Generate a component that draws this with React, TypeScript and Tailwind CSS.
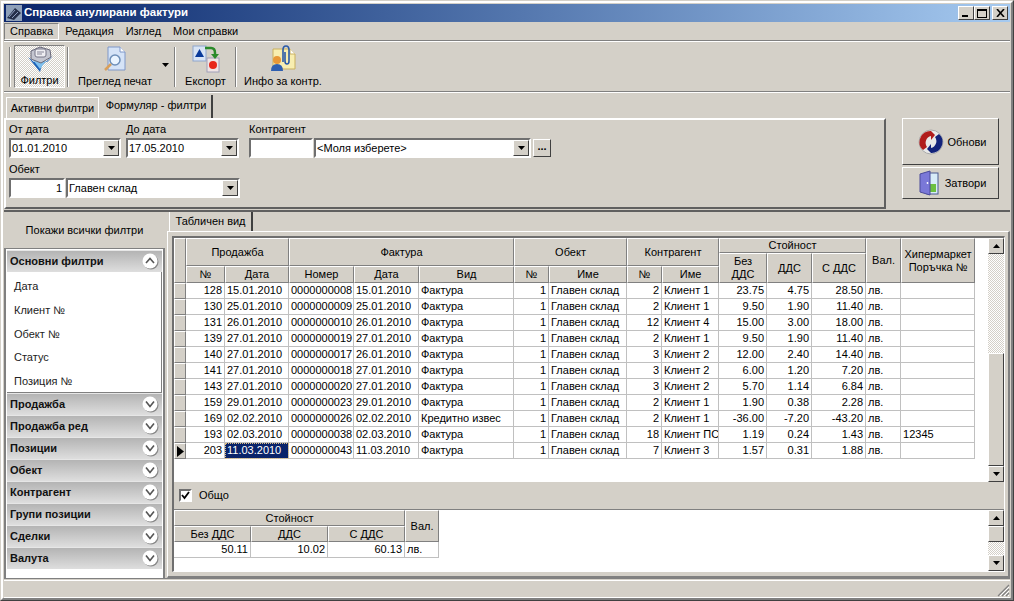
import { ReactNode } from "react";

const raised = "border border-t-white border-l-white border-r-[#404040] border-b-[#404040]";
const sunken = "border-2 border-t-[#6f6f6f] border-l-[#6f6f6f] border-r-white border-b-white";
const dither = "bg-[image:repeating-conic-gradient(#ffffff_0_25%,#d4d0c8_0_50%)] bg-size-[2px_2px]";
const th = "bg-[#d4d0c8] font-normal p-0 text-center overflow-hidden border-t border-l border-t-white border-l-white border-r border-b border-r-[#808080] border-b-[#808080]";

const rows = [
  ["128", "15.01.2010", "0000000008", "15.01.2010", "Фактура", "2", "Клиент 1", "23.75", "4.75", "28.50", ""],
  ["130", "25.01.2010", "0000000009", "25.01.2010", "Фактура", "2", "Клиент 1", "9.50", "1.90", "11.40", ""],
  ["131", "26.01.2010", "0000000010", "26.01.2010", "Фактура", "12", "Клиент 4", "15.00", "3.00", "18.00", ""],
  ["139", "27.01.2010", "0000000019", "27.01.2010", "Фактура", "2", "Клиент 1", "9.50", "1.90", "11.40", ""],
  ["140", "27.01.2010", "0000000017", "26.01.2010", "Фактура", "3", "Клиент 2", "12.00", "2.40", "14.40", ""],
  ["141", "27.01.2010", "0000000018", "27.01.2010", "Фактура", "3", "Клиент 2", "6.00", "1.20", "7.20", ""],
  ["143", "27.01.2010", "0000000020", "27.01.2010", "Фактура", "3", "Клиент 2", "5.70", "1.14", "6.84", ""],
  ["159", "29.01.2010", "0000000023", "29.01.2010", "Фактура", "2", "Клиент 1", "1.90", "0.38", "2.28", ""],
  ["169", "02.02.2010", "0000000026", "02.02.2010", "Кредитно извес", "2", "Клиент 1", "-36.00", "-7.20", "-43.20", ""],
  ["193", "02.03.2010", "0000000038", "02.03.2010", "Фактура", "18", "Клиент ПС", "1.19", "0.24", "1.43", "12345"],
  ["203", "11.03.2010", "0000000043", "11.03.2010", "Фактура", "7", "Клиент 3", "1.57", "0.31", "1.88", ""],
];

const colWidths = ["w-[12px]", "w-[39px]", "w-[64px]", "w-[65px]", "w-[65px]", "w-[95px]", "w-[35px]", "w-[78px]", "w-[35px]", "w-[57px]", "w-[48px]", "w-[45px]", "w-[54px]", "w-[35px]", "w-[74px]"];

const Arrow = ({ up }: { up?: boolean }) => (
  <svg width="7" height="4" viewBox="0 0 7 4">
    <path d={up ? "M3.5 0L7 4H0Z" : "M0 0H7L3.5 4Z"} fill="#000" />
  </svg>
);

const ScrollBtn = ({ up }: { up?: boolean }) => (
  <div className={`${raised} h-[16px] w-[16px] bg-[#d4d0c8] flex items-center justify-center shrink-0`}>
    <Arrow up={up} />
  </div>
);

const Combo = ({ w, text }: { w: string; text: string }) => (
  <div className={`${sunken} ${w} h-[20px] bg-white flex items-center justify-between`}>
    <span className="pl-[1px] whitespace-nowrap">{text}</span>
    <div className={`${raised} h-[16px] w-[16px] bg-[#d4d0c8] flex items-center justify-center`}>
      <Arrow />
    </div>
  </div>
);

const Chevron = ({ up }: { up?: boolean }) => (
  <svg width="17" height="17" viewBox="0 0 17 17">
    <circle cx="9" cy="9" r="7.5" fill="#8a8a8a" />
    <circle cx="8" cy="8" r="7.5" fill="#fff" />
    <path d={up ? "M4 10L8 5.5L12 10" : "M4 5.5L8 10.5L12 5.5"} fill="none" stroke="#555" strokeWidth="1.6" />
  </svg>
);

const SideHead = ({ text, up }: { text: string; up?: boolean }) => (
  <div className="h-[22px] flex items-center justify-between pl-[3px] pr-[3px] bg-linear-to-b from-[#b4b4b4] to-[#dedede] border-t border-t-[#e6e6e6]">
    <span className="font-bold text-[#111]">{text}</span>
    <Chevron up={up} />
  </div>
);

const ToolBtn = ({ w, label, icon, on }: { w: string; label: string; icon: ReactNode; on?: boolean }) => (
  <div
    className={`${w} h-[43px] flex flex-col items-center justify-between ${
      on ? `border border-t-[#808080] border-l-[#808080] border-r-white border-b-white ${dither}` : ""
    }`}
  >
    <div className="h-[27px] flex items-center justify-center">{icon}</div>
    <span className="pb-[1px]">{label}</span>
  </div>
);

const Sep = () => <div className="w-[2px] h-[40px] border-l border-l-[#808080] border-r border-r-white mx-[2px]" />;

const FilterIcon = () => (
  <svg width="30" height="27" viewBox="0 0 30 27">
    <path d="M3 11L15 26L17 19L28 10L22 16H9Z" fill="#1d63b8" />
    <path d="M8 14L15 23L21 15Z" fill="#7fc0ee" />
    <path d="M6 5L15 1L25 4L26 11L16 17L6 13Z" fill="#c4c6d0" stroke="#667" />
    <rect x="10" y="3" width="11" height="8" rx="2" fill="#eeeef2" stroke="#778" />
    <path d="M12 6H19M12 8H17" stroke="#889" />
  </svg>
);

const PreviewIcon = () => (
  <svg width="24" height="26" viewBox="0 0 24 26">
    <path d="M5 1H17L22 6V24H5Z" fill="#d5e3f7" stroke="#7f97c8" />
    <path d="M17 1V6H22" fill="#fff" stroke="#7f97c8" />
    <circle cx="12" cy="14" r="5" fill="#eaf4ff" stroke="#6f8fb8" strokeWidth="1.5" />
    <path d="M8 18L2 24" stroke="#d9a05c" strokeWidth="2.5" />
  </svg>
);

const ExportIcon = () => (
  <svg width="28" height="28" viewBox="0 0 28 28">
    <rect x="1" y="1" width="13" height="15" fill="#d8e4f5" stroke="#8ea5cc" />
    <path d="M7.5 4L12 12H3Z" fill="#0a3a9a" />
    <rect x="15" y="13" width="12" height="14" fill="#f0e4e4" stroke="#a0a0b8" />
    <circle cx="21" cy="20" r="4" fill="#e8261a" />
    <path d="M13 3H19Q23 3 23 8V11" fill="none" stroke="#2a8a2a" strokeWidth="2.5" />
    <path d="M19 9H27L23 14Z" fill="#2a8a2a" />
  </svg>
);

const InfoIcon = () => (
  <svg width="26" height="27" viewBox="0 0 26 27">
    <path d="M3 4H20L25 9V24H3Z" fill="#f8eeb0" stroke="#c9b060" />
    <path d="M20 4V9H25" fill="#fff" stroke="#c9b060" />
    <path d="M13 17V5Q13 1 16 1Q19 1 19 5V16Q19 19 17 19Q15 19 15 16V7" fill="none" stroke="#2a5aa8" strokeWidth="1.6" />
    <circle cx="7" cy="15" r="4" fill="#e89838" />
    <path d="M1 26Q1 19 7 19Q13 19 13 26Z" fill="#2f5fb0" />
  </svg>
);

const RefreshIcon = () => (
  <svg width="26" height="26" viewBox="0 0 26 26">
    <circle cx="13" cy="13" r="12" fill="#e8e8e8" stroke="#aaa" />
    <path d="M13 2A11 11 0 0 0 5 21L9 18A7 7 0 0 1 13 7V11L17 6L13 2Z" fill="#b01c1c" />
    <path d="M13 24A11 11 0 0 0 21 5L17 8A7 7 0 0 1 13 19V15L9 20L13 24Z" fill="#12227a" />
  </svg>
);

const DoorIcon = () => (
  <svg width="20" height="26" viewBox="0 0 20 26">
    <rect x="8" y="3" width="11" height="21" fill="#d8ecf8" stroke="#4a5a90" />
    <rect x="10" y="14" width="7" height="8" fill="#6cc040" />
    <path d="M1 4L11 1V25L1 22Z" fill="#7a78d8" stroke="#4a4a9a" />
    <circle cx="8.5" cy="13" r="0.9" fill="#fff" />
  </svg>
);

const App = () => {
  return (
    <div className="w-[1014px] h-[601px] overflow-hidden bg-[#d4d0c8] border border-t-[#d4d0c8] border-l-[#d4d0c8] border-r-[#404040] border-b-[#404040] font-['Liberation_Sans',sans-serif] text-[11px] leading-none text-black">
      <div className="h-full border-2 border-t-white border-l-white border-r-[#808080] border-b-[#808080] px-[1px] pt-[1px] flex flex-col">
        {/* title bar */}
        <div className="h-[18px] bg-linear-to-r from-[#0a246a] to-[#a6caf0] flex items-center justify-between pl-[2px] pr-[2px] shrink-0">
          <div className="flex items-center gap-[2px]">
            <svg width="16" height="16" viewBox="0 0 16 16">
              <rect width="16" height="16" fill="#8fa0b8" />
              <path d="M1 13L9 3L15 8L8 15Z" fill="#26304a" />
              <path d="M3 12L9 5M6 13L12 7" stroke="#8f9fc0" />
            </svg>
            <span className="text-white font-bold text-[11.5px]">Справка анулирани фактури</span>
          </div>
          <div className="flex items-center">
            <div className={`${raised} w-[16px] h-[14px] bg-[#d4d0c8] flex items-end pl-[3px] pb-[2px]`}>
              <div className="w-[6px] h-[2px] bg-black" />
            </div>
            <div className={`${raised} w-[16px] h-[14px] bg-[#d4d0c8] flex items-center justify-center ml-[0px]`}>
              <div className="w-[10px] h-[9px] border border-black border-t-2" />
            </div>
            <div className={`${raised} w-[16px] h-[14px] bg-[#d4d0c8] flex items-center justify-center ml-[2px]`}>
              <svg width="9" height="8" viewBox="0 0 9 8">
                <path d="M1 0L8 8M8 0L1 8" stroke="#000" strokeWidth="1.6" />
              </svg>
            </div>
          </div>
        </div>

        {/* menu */}
        <div className="h-[19px] flex items-center shrink-0 border-b border-b-[#808080] pt-[1px]">
          <div className="h-[17px] px-[5px] flex items-center border border-t-[#808080] border-l-[#808080] border-r-white border-b-white">Справка</div>
          <div className="pl-[6px] pr-[6px]">Редакция</div>
          <div className="pl-[6px] pr-[6px]">Изглед</div>
          <div className="pl-[6px]">Мои справки</div>
        </div>

        {/* toolbar */}
        <div className="h-[51px] shrink-0 border-t border-t-white border-b border-b-[#808080] flex items-center pl-[3px]">
          <Sep />
          <div className="w-[1px]" />
          <ToolBtn w="w-[51px]" label="Филтри" icon={<FilterIcon />} on />
          <Sep />
          <ToolBtn w="w-[88px]" label="Преглед печат" icon={<PreviewIcon />} />
          <div className="w-[13px] pl-[3px] pb-[3px] flex justify-start">
            <Arrow />
          </div>
          <Sep />
          <ToolBtn w="w-[55px]" label="Експорт" icon={<ExportIcon />} />
          <Sep />
          <ToolBtn w="w-[88px]" label="Инфо за контр." icon={<InfoIcon />} />
        </div>

        {/* tabs and filter form */}
        <div className="shrink-0 border-t border-t-white pt-[2px] flex pb-[1px]">
          <div className="w-[882px]">
            <div className="h-[23px] flex items-end pl-[2px]">
              <div className="h-[21px] w-[93px] flex items-center justify-center border-t border-l border-t-white border-l-white border-r border-r-white">Активни филтри</div>
              <div className="h-[23px] w-[114px] flex items-center justify-center pb-[2px] pl-[2px] border-r-2 border-r-[#404040]">Формуляр - филтри</div>
            </div>
            <div className="h-[91px] border-2 border-t-white border-l-white border-r-[#606060] border-b-[#606060] pl-[3px] pt-[4px]">
              <div className="flex">
                <div className="w-[117px]">
                  <div className="h-[14px]">От дата</div>
                  <Combo w="w-[112px]" text="01.01.2010" />
                </div>
                <div className="w-[123px]">
                  <div className="h-[14px]">До дата</div>
                  <Combo w="w-[113px]" text="17.05.2010" />
                </div>
                <div>
                  <div className="h-[14px]">Контрагент</div>
                  <div className="flex">
                    <div className={`${sunken} w-[64px] h-[20px] bg-white`} />
                    <div className="w-[1px]" />
                    <Combo w="w-[217px]" text="<Моля изберете>" />
                    <div className={`${raised} w-[18px] h-[18px] bg-[#d4d0c8] ml-[2px] mt-[1px] flex items-center justify-center font-bold pb-[4px]`}>...</div>
                  </div>
                </div>
              </div>
              <div className="h-[20px] pt-[6px]">Обект</div>
              <div className="flex">
                <div className={`${sunken} w-[56px] h-[20px] bg-white text-right pr-[1px] flex items-center justify-end`}>1</div>
                <div className="w-[1px]" />
                <Combo w="w-[174px]" text="Главен склад" />
              </div>
            </div>
          </div>
          <div className="flex flex-col pl-[16px] pt-[23px]">
            <div className={`${raised} w-[97px] h-[47px] flex items-center justify-center gap-[3px] pl-[4px] pt-[1px]`}>
              <RefreshIcon />
              <span>Обнови</span>
            </div>
            <div className={`${raised} w-[97px] h-[32px] mt-[2px] flex items-center justify-center gap-[6px] pl-[4px]`}>
              <DoorIcon />
              <span>Затвори</span>
            </div>
          </div>
        </div>

        {/* lower part */}
        <div className="h-[368px] shrink-0 flex">
          {/* filter list */}
          <div className="w-[161px] shrink-0 border-t-2 border-t-[#606060] flex flex-col">
            <div className="h-[36px] flex items-center justify-center shrink-0">Покажи всички филтри</div>
            <div className="flex-1 bg-white border-t border-t-[#808080] border-l-2 border-l-[#808080] border-r-2 border-r-[#808080] pl-[1px] pr-[1px] pt-[1px] flex flex-col">
              <SideHead text="Основни филтри" up />
              <div className="h-[121px] border-b border-b-[#808080] border-r border-r-[#808080] flex flex-col justify-between pt-[9px] pb-[5px] pl-[7px] shrink-0 text-[#222]">
                <div>Дата</div>
                <div>Клиент №</div>
                <div>Обект №</div>
                <div>Статус</div>
                <div>Позиция №</div>
              </div>
              <SideHead text="Продажба" />
              <SideHead text="Продажба ред" />
              <SideHead text="Позиции" />
              <SideHead text="Обект" />
              <SideHead text="Контрагент" />
              <SideHead text="Групи позиции" />
              <SideHead text="Сделки" />
              <SideHead text="Валута" />
            </div>
          </div>

          {/* table view */}
          <div className="flex-1 pl-[2px] flex flex-col border-t-2 border-t-[#606060]">
            <div className="h-[19px] pl-[2px] shrink-0">
              <div className="h-[19px] w-[84px] flex items-center justify-center border-l border-l-white border-r-2 border-r-[#404040]">Табличен вид</div>
            </div>
            <div className="flex-1 border-t border-t-white border-l border-l-white border-r-2 border-r-[#808080] border-b-2 border-b-[#808080] pt-[4px] pb-[4px] pl-[4px] pr-[3px] flex flex-col">
              <div className="flex-1 flex flex-col border-t-2 border-l-2 border-t-[#6f6f6f] border-l-[#6f6f6f] border-b border-b-white border-r border-r-white">
                {/* main grid */}
                <div className="h-[244px] shrink-0 bg-white flex justify-between">
                  <table className="table-fixed border-separate border-spacing-0 h-fit w-[801px]">
                    <colgroup>
                      {colWidths.map((w, i) => (
                        <col key={i} className={w} />
                      ))}
                    </colgroup>
                    <thead>
                      <tr className="h-[15px]">
                        <th rowSpan={3} className={th} />
                        <th rowSpan={2} colSpan={2} className={th}>Продажба</th>
                        <th rowSpan={2} colSpan={3} className={th}>Фактура</th>
                        <th rowSpan={2} colSpan={2} className={th}>Обект</th>
                        <th rowSpan={2} colSpan={2} className={th}>Контрагент</th>
                        <th colSpan={3} className={th}>Стойност</th>
                        <th rowSpan={3} className={th}>Вал.</th>
                        <th rowSpan={3} className={`${th} leading-[13px]`}>Хипермаркет Поръчка №</th>
                      </tr>
                      <tr className="h-[13px]">
                        <th rowSpan={2} className={`${th} leading-[13px]`}>
                          Без
                          <br />
                          ДДС
                        </th>
                        <th rowSpan={2} className={th}>ДДС</th>
                        <th rowSpan={2} className={th}>С ДДС</th>
                      </tr>
                      <tr className="h-[17px]">
                        <th className={th}>№</th>
                        <th className={th}>Дата</th>
                        <th className={th}>Номер</th>
                        <th className={th}>Дата</th>
                        <th className={th}>Вид</th>
                        <th className={th}>№</th>
                        <th className={th}>Име</th>
                        <th className={th}>№</th>
                        <th className={th}>Име</th>
                      </tr>
                    </thead>
                    <tbody>
                      {rows.map((r, i) => (
                        <tr key={r[0]} className="h-[16px]">
                          <Ind active={i === rows.length - 1} />
                          <Td right>{r[0]}</Td>
                          {i === rows.length - 1 ? (
                            <td className="p-0 border-r border-b border-r-[#c0c0c0] border-b-[#c0c0c0] bg-[#0a246a] text-white pl-[2px] outline-1 outline-dotted -outline-offset-1 outline-[#e0c080] whitespace-nowrap overflow-hidden">{r[1]}</td>
                          ) : (
                            <Td>{r[1]}</Td>
                          )}
                          <Td>{r[2]}</Td>
                          <Td>{r[3]}</Td>
                          <Td>{r[4]}</Td>
                          <Td right>1</Td>
                          <Td>Главен склад</Td>
                          <Td right>{r[5]}</Td>
                          <Td>{r[6]}</Td>
                          <Td right>{r[7]}</Td>
                          <Td right>{r[8]}</Td>
                          <Td right>{r[9]}</Td>
                          <Td>лв.</Td>
                          <Td>{r[10]}</Td>
                        </tr>
                      ))}
                    </tbody>
                  </table>
                  <div className="w-[16px] flex flex-col h-full">
                    <ScrollBtn up />
                    <div className={`h-[99px] shrink-0 ${dither}`} />
                    <div className={`${raised} flex-1 bg-[#d4d0c8]`} />
                    <ScrollBtn />
                  </div>
                </div>

                {/* total checkbox */}
                <div className="h-[28px] shrink-0 flex items-center pl-[5px] gap-[7px] border-b border-b-[#808080]">
                  <div className={`${sunken} w-[13px] h-[13px] bg-white flex items-center justify-center`}>
                    <svg width="9" height="9" viewBox="0 0 9 9">
                      <path d="M1 4L3.5 7L8 1" fill="none" stroke="#000" strokeWidth="1.8" />
                    </svg>
                  </div>
                  <span>Общо</span>
                </div>

                {/* total grid */}
                <div className="flex-1 bg-white flex justify-between">
                  <table className="table-fixed border-separate border-spacing-0 h-fit w-[265px]">
                    <colgroup>
                      <col className="w-[77px]" />
                      <col className="w-[77px]" />
                      <col className="w-[77px]" />
                      <col className="w-[34px]" />
                    </colgroup>
                    <thead>
                      <tr className="h-[16px]">
                        <th colSpan={3} className={th}>Стойност</th>
                        <th rowSpan={2} className={th}>Вал.</th>
                      </tr>
                      <tr className="h-[16px]">
                        <th className={th}>Без ДДС</th>
                        <th className={th}>ДДС</th>
                        <th className={th}>С ДДС</th>
                      </tr>
                    </thead>
                    <tbody>
                      <tr className="h-[16px]">
                        <Td right>50.11</Td>
                        <Td right>10.02</Td>
                        <Td right>60.13</Td>
                        <Td>лв.</Td>
                      </tr>
                    </tbody>
                  </table>
                  <div className="w-[16px] flex flex-col h-full">
                    <ScrollBtn up />
                    <div className={`${raised} h-[16px] bg-[#d4d0c8]`} />
                    <div className={`flex-1 ${dither}`} />
                    <ScrollBtn />
                  </div>
                </div>
              </div>
            </div>
          </div>
        </div>

        {/* status bar */}
        <div className="flex-1 border-t border-t-[#808080] flex items-end justify-end">
          <div className="h-[18px] w-full border-t border-t-white border-b border-b-white flex items-end justify-end">
            <svg width="13" height="13" viewBox="0 0 13 13">
              <path d="M12 1L1 12M12 5L5 12M12 9L9 12" stroke="#808080" strokeWidth="1.2" />
              <path d="M12 3L3 12M12 7L7 12M12 11L11 12" stroke="#fff" strokeWidth="1" />
            </svg>
          </div>
        </div>
      </div>
    </div>
  );
};

const Ind = ({ active }: { active?: boolean }) => (
  <td className="p-0 bg-[#d4d0c8] border-t border-l border-t-white border-l-white border-r border-b border-r-[#808080] border-b-[#808080]">
    {active && (
      <svg width="8" height="11" viewBox="0 0 8 11" className="ml-[2px]">
        <path d="M0 0L7 5.5L0 11Z" fill="#000" />
      </svg>
    )}
  </td>
);

const Td = ({ children, right }: { children?: ReactNode; right?: boolean }) => (
  <td
    className={`p-0 px-[2px] border-r border-b border-r-[#c0c0c0] border-b-[#c0c0c0] whitespace-nowrap overflow-hidden ${
      right ? "text-right" : "text-left"
    }`}
  >
    {children}
  </td>
);

export default App;
